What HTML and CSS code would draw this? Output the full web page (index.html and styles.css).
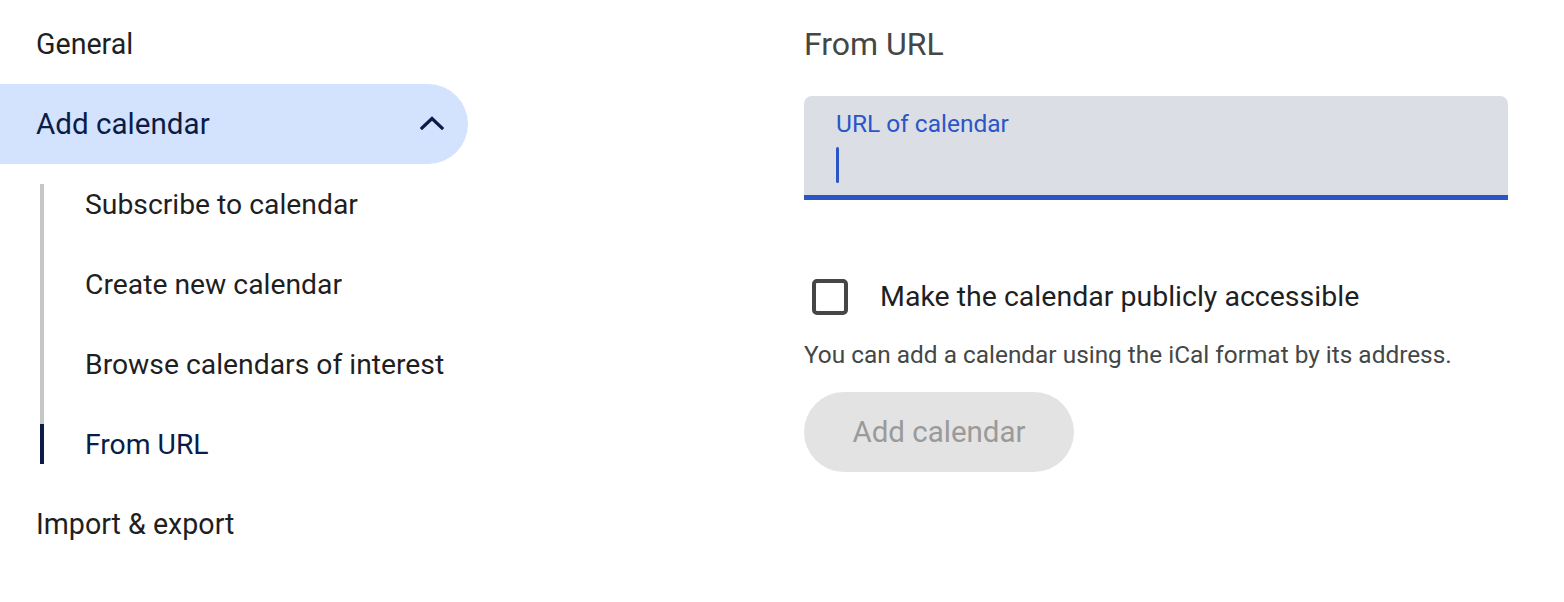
FILE: index.html
```html
<!DOCTYPE html>
<html lang="en">
<head>
<meta charset="utf-8">
<title>Settings - Add calendar</title>
<link rel="stylesheet" href="styles.css">
</head>
<body>
<div class="page">
  <nav class="nav">
    <div class="nav-item">General</div>
    <div class="nav-item nav-item--open">
      <span>Add calendar</span>
      <svg class="chev" width="24" height="14" viewBox="0 0 24 14"><path d="M2 12 L12 2.5 L22 12" fill="none" stroke="#0b1c48" stroke-width="3.2" stroke-linecap="square"/></svg>
    </div>
    <div class="subnav">
      <div class="sub-item">Subscribe to calendar</div>
      <div class="sub-item">Create new calendar</div>
      <div class="sub-item">Browse calendars of interest</div>
      <div class="sub-item sub-item--active">From URL</div>
    </div>
    <div class="nav-item">Import &amp; export</div>
  </nav>
  <main class="main">
    <h1 class="title">From URL</h1>
    <div class="field">
      <div class="field-label">URL of calendar</div>
      <div class="caret"></div>
    </div>
    <label class="check-row">
      <span class="checkbox"></span>
      <span class="check-label">Make the calendar publicly accessible</span>
    </label>
    <p class="hint">You can add a calendar using the iCal format by its address.</p>
    <button class="btn" disabled>Add calendar</button>
  </main>
</div>
</body>
</html>
```

FILE: styles.css
```css
html, body {
  margin: 0;
  padding: 0;
  background: #ffffff;
}

.page {
  display: flex;
  font-family: Roboto, "Liberation Sans", sans-serif;
  color: #1f1f1f;
}

.nav {
  width: 468px;
  padding-top: 4px;
  display: flex;
  flex-direction: column;
}

.nav-item {
  height: 80px;
  display: flex;
  align-items: center;
  padding-left: 36px;
  font-size: 28.6px;
  color: #1f1f1f;
}

.nav-item--open {
  background: #d3e3fd;
  border-radius: 0 40px 40px 0;
  color: #0b1c48;
  font-size: 29.6px;
  justify-content: space-between;
  padding-right: 24px;
}

.chev {
  display: block;
  margin-top: -2px;
}

.subnav {
  margin-left: 40px;
  display: flex;
  flex-direction: column;
  background: linear-gradient(#c7c7c7, #c7c7c7) no-repeat 0 20px / 4px 240px;
}

.sub-item {
  height: 80px;
  display: flex;
  align-items: center;
  padding-left: 45px;
  font-size: 28.3px;
  color: #1f1f1f;
}

.sub-item--active {
  color: #0b1c48;
  background: linear-gradient(#0b1c48, #0b1c48) no-repeat 0 20px / 4px 40px;
}

.main {
  margin-left: 336px;
  width: 704px;
  padding-top: 24px;
  display: flex;
  flex-direction: column;
  align-items: flex-start;
}

.title {
  margin: 0;
  font-size: 32px;
  font-weight: 400;
  line-height: 40px;
  color: #444746;
}

.field {
  margin-top: 32px;
  width: 704px;
  height: 104px;
  box-sizing: border-box;
  background: #dcdee6;
  border-radius: 8px 8px 0 0;
  border-bottom: 5px solid #2a56c6;
  padding: 14px 32px 0;
}

.field-label {
  font-size: 24.5px;
  line-height: 28px;
  color: #2a56c6;
}

.caret {
  margin-top: 9px;
  width: 3px;
  height: 36px;
  border-radius: 2px;
  background: #2a56c6;
}

.check-row {
  margin-top: 79px;
  display: flex;
  align-items: center;
  gap: 32px;
  padding-left: 8px;
  height: 36px;
}

.checkbox {
  width: 36px;
  height: 36px;
  box-sizing: border-box;
  border: 4px solid #444746;
  border-radius: 5px;
}

.check-label {
  font-size: 28.5px;
  line-height: 36px;
  color: #1f1f1f;
}

.hint {
  margin: 25px 0 0;
  font-size: 24.4px;
  line-height: 30px;
  color: #444746;
}

.btn {
  margin-top: 22px;
  height: 80px;
  width: 270px;
  border: none;
  border-radius: 40px;
  background: #e3e3e3;
  color: #9a9a9a;
  font-family: Roboto, "Liberation Sans", sans-serif;
  font-size: 29.5px;
  padding: 0;
}
```
